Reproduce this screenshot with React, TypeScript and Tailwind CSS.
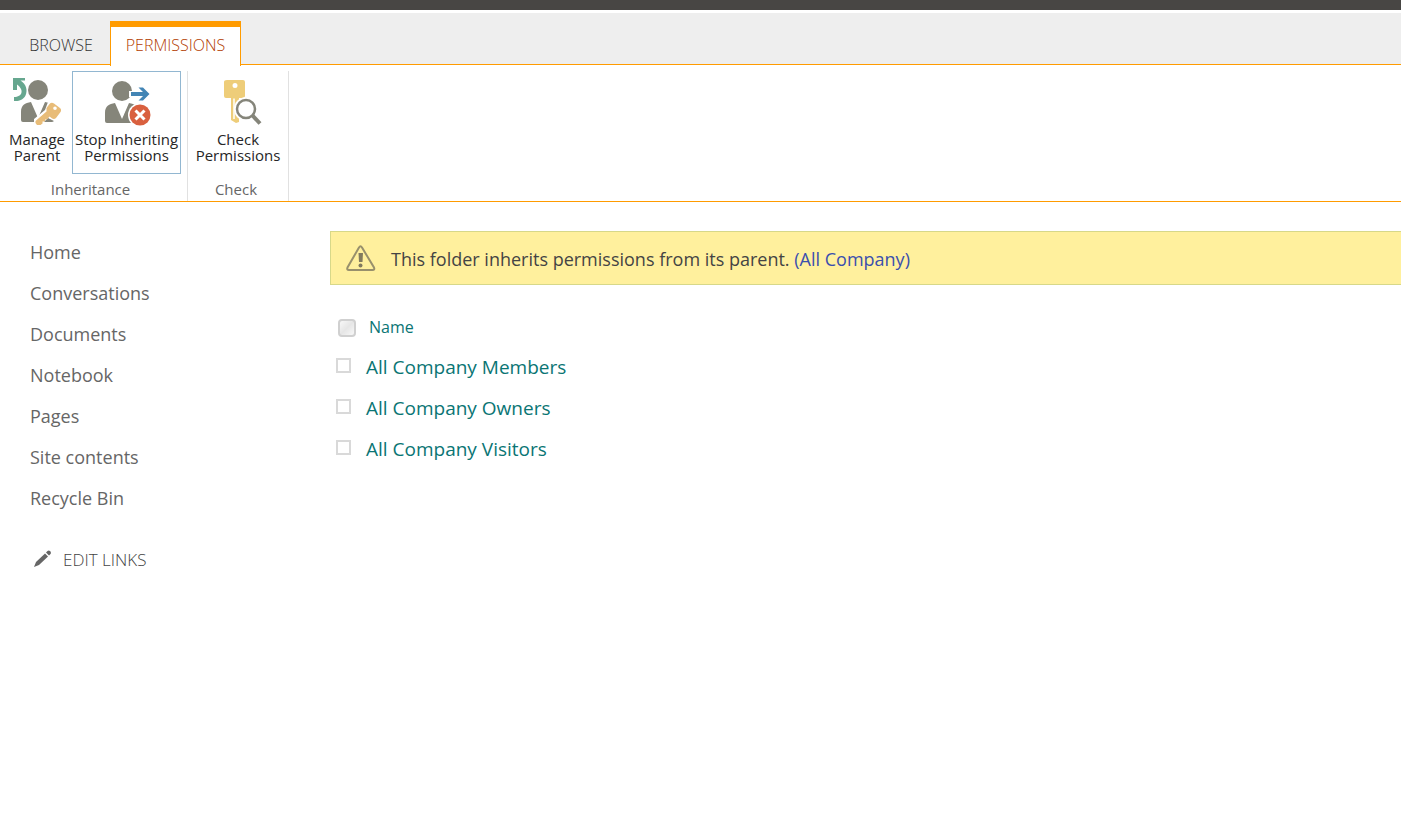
import React from "react";

const navItems = ["Home", "Conversations", "Documents", "Notebook", "Pages", "Site contents", "Recycle Bin"];
const groups = ["All Company Members", "All Company Owners", "All Company Visitors"];

function Person() {
  return (
    <g>
      <circle cx="25" cy="12" r="10" fill="#85857a" />
      <path d="M8 42V34C8 27 12 25 18 24L25 40L32 24C38 25 41 27 41 34V42Q41 44 39 44H10Q8 44 8 42Z" fill="#85857a" />
      <path d="M18.500 23.500Q25 26 31.500 23.500L25.500 38Z" fill="#fff" />
    </g>
  );
}

function ManageParentIcon() {
  return (
    <svg className="h-12 w-12" viewBox="0 0 48 48" aria-hidden="true">
      <Person />
      <path d="M0 0H12V2.500H7.500C13 6 15 12 12.500 17.500C10 22 6 23.500 1 23V19C9.500 19 11.500 12 4 6.500V12H0Z" fill="#66a78f" />
      <path d="M35 24L48 31L41 43L35 40L27 48L21 46V41L32 32Z" fill="#fff" />
      <path
        fillRule="evenodd"
        d="M36.500 26Q38.500 24 41 25.500L47 30Q49 32 47.500 34L43 40Q41 42 38.500 40L36.500 38.500L34 41.500H32V43.500H29.500V45.500L27.500 47H24L22.500 45V43L33.500 33.500L33.500 30ZM42 28.500A1.800 1.800 0 1 0 42 32.100A1.800 1.800 0 1 0 42 28.500Z"
        fill="#e8bc78"
      />
    </svg>
  );
}

function StopInheritingIcon() {
  return (
    <svg className="h-12 w-12" viewBox="0 0 48 48" aria-hidden="true">
      <g transform="translate(-6 1)">
        <Person />
      </g>
      <path d="M27 14H40L36 9H40L46 15.500L40 22H36L40 18H27Z" fill="#fff" stroke="#fff" strokeWidth="2" />
      <path d="M28 14H40L35.500 9.500H40L46.500 16L40 22.500H35.500L40 18H28Z" fill="#4385b5" />
      <circle cx="37" cy="37" r="12" fill="#fff" />
      <circle cx="37" cy="37" r="10.500" fill="#d9603f" />
      <path d="M32.500 32.500L41.500 41.500M41.500 32.500L32.500 41.500" stroke="#fff" strokeWidth="3" />
    </svg>
  );
}

function CheckIcon() {
  return (
    <svg className="h-12 w-12" viewBox="0 0 48 48" aria-hidden="true">
      <g transform="translate(0 1)">
        <path
          fillRule="evenodd"
          d="M13 1H29Q31 1 31 3V17Q31 19 29 19H25V43L22 44L17 41V19H12Q10 19 10 17V3Q10 1 13 1ZM21 4A2.500 2.500 0 1 0 21 9A2.500 2.500 0 1 0 21 4Z"
          fill="#eecd79"
        />
        <path d="M20 19.500V40" stroke="#fff" strokeWidth="1.500" />
        <circle cx="32" cy="30" r="12" fill="#fff" />
        <circle cx="32" cy="30" r="9" fill="#fff" stroke="#85857a" strokeWidth="2.500" />
        <path d="M38.500 36.500L46 44.500" stroke="#85857a" strokeWidth="4" />
      </g>
    </svg>
  );
}

function WarningIcon() {
  return (
    <svg className="h-8 w-8" viewBox="0 0 32 32" fill="none" aria-hidden="true">
      <path d="M14 4.500Q15.500 2 17 4.500L29 24.500Q30 27 27.500 27H4Q1.500 27 2.500 24.500Z" stroke="#98906c" strokeWidth="2" />
      <path d="M13.500 10H18L17.500 19H14Z" fill="#817a5e" />
      <circle cx="15.500" cy="22.500" r="2" fill="#817a5e" />
    </svg>
  );
}

function PencilIcon() {
  return (
    <svg className="h-5 w-5" viewBox="0 0 20 20" fill="#666" aria-hidden="true">
      <path d="M2 17L4 12L13 3.500L16 6.500L7 15Z" />
      <path d="M14 2.500L15.500 1Q16.500 0 18 1L18.500 1.500Q19.500 3 18.500 4L17 5.500Z" />
    </svg>
  );
}

function RibbonButton({ icon, top, bottom, className }: { icon: React.ReactNode; top: string; bottom: string; className: string }) {
  return (
    <button type="button" className={"flex flex-col items-center border pt-[6px] text-[15px] leading-4 whitespace-nowrap text-[#262626] " + className}>
      {icon}
      <span className="pt-[5px]">
        {top}
        <br />
        {bottom}
      </span>
    </button>
  );
}

export default function App() {
  return (
    <div className="min-h-screen bg-white font-['Open_Sans','Noto_Sans',sans-serif] text-[#666]">
      <div className="h-[10px] bg-[#484644]" />
      <header className="mt-[3px]">
        <div role="tablist" className="flex h-[52px] items-end border-b border-[#ff9b00] bg-[#eee] pl-3 text-[16px]">
          <button type="button" role="tab" aria-selected="false" className="h-[38px] w-[98px] font-light text-[#333]">
            BROWSE
          </button>
          <button type="button" role="tab" aria-selected="true" className="-mb-[2px] h-[45px] w-[131px] border-x border-t-[6px] border-[#ff9b00] bg-white pb-[3px] font-light text-[#b23c00]">
            PERMISSIONS
          </button>
        </div>
        <div className="flex h-[137px] items-stretch border-b border-[#ff9b00] pt-[6px]">
          <section className="flex flex-col border-r border-[#e1e1e1] pr-[6px]">
            <div className="flex">
              <RibbonButton icon={<ManageParentIcon />} top="Manage" bottom="Parent" className="h-[103px] w-[72px] border-transparent pl-[2px]" />
              <RibbonButton icon={<StopInheritingIcon />} top="Stop Inheriting" bottom="Permissions" className="h-[103px] w-[109px] border-[#92b7d1]" />
            </div>
            <h2 className="pt-1 text-center text-[15px]">Inheritance</h2>
          </section>
          <section className="flex flex-col border-r border-[#e1e1e1]">
            <RibbonButton icon={<CheckIcon />} top="Check" bottom="Permissions" className="h-[103px] w-[100px] border-transparent" />
            <h2 className="pt-1 pr-1 text-center text-[15px]">Check</h2>
          </section>
        </div>
      </header>
      <div className="flex pt-[29px]">
        <nav className="w-[330px] shrink-0 pt-px pl-[30px] text-[18px]">
          <ul>
            {navItems.map((item) => (
              <li key={item} className="flex h-[41px] items-center">
                <a href="#">{item}</a>
              </li>
            ))}
          </ul>
          <a href="#" className="mt-5 flex h-[41px] items-center gap-[11px] pl-[2px] font-light text-[#444]">
            <PencilIcon />
            <span className="text-[17px]">EDIT LINKS</span>
          </a>
        </nav>
        <main className="min-w-0 grow">
          <div className="flex h-[54px] items-center gap-[14px] border border-r-0 border-[#d7d889] bg-[#fff09d] pt-[2px] pl-[14px] text-[18px] text-[#444]">
            <WarningIcon />
            <p>
              This folder inherits permissions from its parent. <a href="#" className="text-[#3a4fae]">(All Company)</a>
            </p>
          </div>
          <table className="mt-[21px] text-left text-[#0a7574]">
            <thead>
              <tr className="h-[41px]">
                <th className="w-9 pt-[3px] pl-2">
                  <input type="checkbox" aria-label="Select all" className="block h-[18px] w-[18px] appearance-none rounded-sm border-2 border-[#d0d0d0] bg-linear-to-br from-[#f8f8f8] via-[#e6e6e6] to-[#f8f8f8]" />
                </th>
                <th className="pl-[3px] text-[16px] font-normal">Name</th>
              </tr>
            </thead>
            <tbody>
              {groups.map((g, i) => (
                <tr key={g} className="h-[41px]">
                  <td className="pb-[4px] pl-[6px]">
                    <input id={"group-" + i} type="checkbox" className="block h-[15px] w-[15px] appearance-none border-2 border-[#d9d9d9] bg-white" />
                  </td>
                  <td className="text-[19px]">
                    <label htmlFor={"group-" + i}>{g}</label>
                  </td>
                </tr>
              ))}
            </tbody>
          </table>
        </main>
      </div>
    </div>
  );
}
